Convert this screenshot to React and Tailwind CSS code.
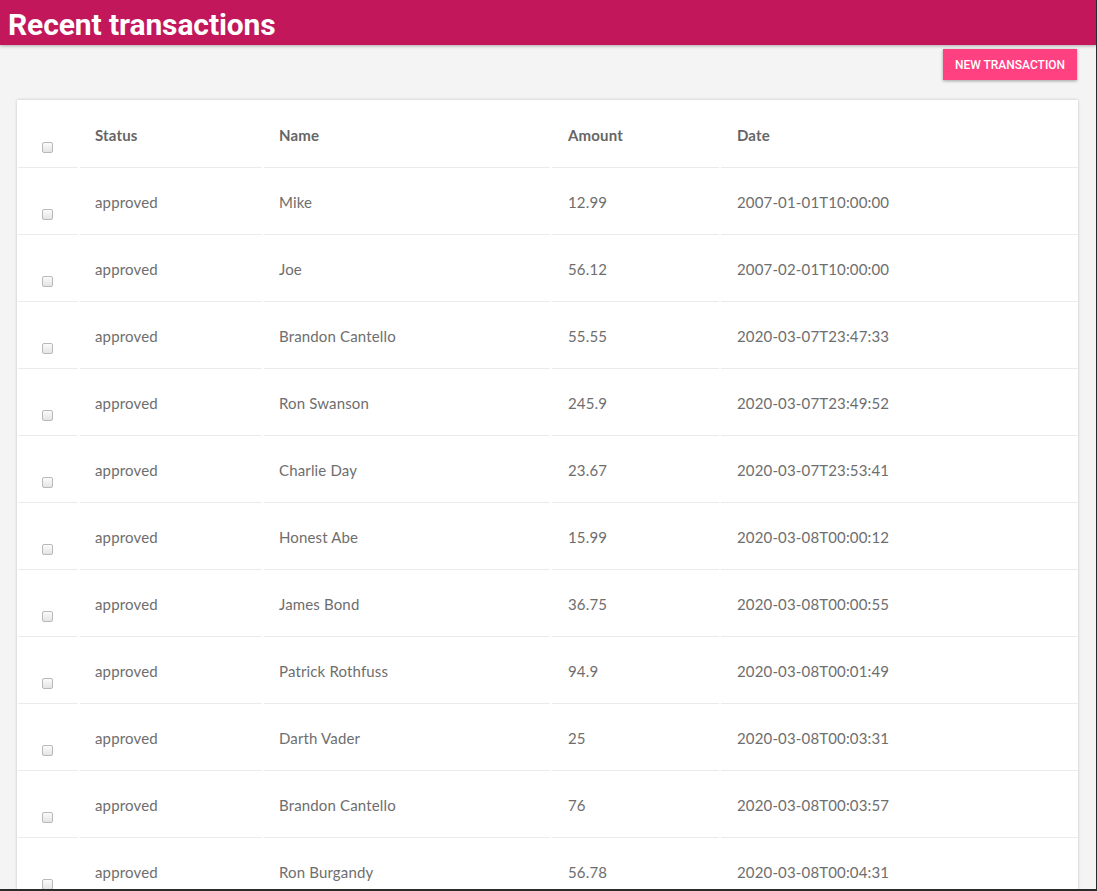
const transactions = [
  { status: 'approved', name: 'Mike', amount: '12.99', date: '2007-01-01T10:00:00' },
  { status: 'approved', name: 'Joe', amount: '56.12', date: '2007-02-01T10:00:00' },
  { status: 'approved', name: 'Brandon Cantello', amount: '55.55', date: '2020-03-07T23:47:33' },
  { status: 'approved', name: 'Ron Swanson', amount: '245.9', date: '2020-03-07T23:49:52' },
  { status: 'approved', name: 'Charlie Day', amount: '23.67', date: '2020-03-07T23:53:41' },
  { status: 'approved', name: 'Honest Abe', amount: '15.99', date: '2020-03-08T00:00:12' },
  { status: 'approved', name: 'James Bond', amount: '36.75', date: '2020-03-08T00:00:55' },
  { status: 'approved', name: 'Patrick Rothfuss', amount: '94.9', date: '2020-03-08T00:01:49' },
  { status: 'approved', name: 'Darth Vader', amount: '25', date: '2020-03-08T00:03:31' },
  { status: 'approved', name: 'Brandon Cantello', amount: '76', date: '2020-03-08T00:03:57' },
  { status: 'approved', name: 'Ron Burgandy', amount: '56.78', date: '2020-03-08T00:04:31' },
];

function Checkbox() {
  return (
    <span className="mt-[41px] ml-[24px] block h-[11px] w-[11px] rounded-[2px] border border-[#b9b9b9] bg-gradient-to-b from-[#fbfbfb] to-[#e4e4e4]" />
  );
}

function Row({ cells }) {
  const cell = 'flex h-[67px] items-center border-b border-[#ebebeb] pt-[2px]';
  return (
    <div className="flex gap-[2px]">
      <div className="h-[67px] w-[60px] shrink-0 border-b border-[#ebebeb]">
        <Checkbox />
      </div>
      <div className={`${cell} w-[182px] shrink-0 pl-[15px]`}>{cells[0]}</div>
      <div className={`${cell} w-[286px] shrink-0 pl-[15px]`}>{cells[1]}</div>
      <div className={`${cell} w-[167px] shrink-0 pl-[16px]`}>{cells[2]}</div>
      <div className={`${cell} flex-1 pl-[16px]`}>{cells[3]}</div>
    </div>
  );
}

export default function App() {
  return (
    <div
      className="h-[891px] overflow-hidden border-r border-b-2 border-[#2b2b2b] bg-[#f4f4f4]"
      style={{ fontFamily: 'Lato, "Open Sans", sans-serif' }}
    >
      <header className="relative z-10 flex h-[45px] items-center bg-[#c2185b] px-[8px] pt-[5px] shadow-[0_1px_3px_rgba(0,0,0,0.3)]">
        <h1 className="font-['Roboto'] text-[30px] font-bold leading-none tracking-[-0.1px] text-white">
          Recent transactions
        </h1>
      </header>

      <div className="flex justify-end pr-[19px] pt-[4px]">
        <button className="h-[31px] w-[134px] bg-[#ff4081] font-['Roboto'] text-[12px] font-medium uppercase text-white shadow-[0_1px_3px_rgba(0,0,0,0.35)]">
          New transaction
        </button>
      </div>

      <div className="mx-[17px] mt-[20px] w-[1061px] bg-white pt-px pl-px text-[15px] tracking-[0.15px] text-[#6e6e6e] shadow-[0_0_3px_rgba(0,0,0,0.2)]">
        <div className="font-bold text-[#666666]">
          <Row cells={['Status', 'Name', 'Amount', 'Date']} />
        </div>
        {transactions.map((t, i) => (
          <Row key={i} cells={[t.status, t.name, t.amount, t.date]} />
        ))}
      </div>
    </div>
  );
}
